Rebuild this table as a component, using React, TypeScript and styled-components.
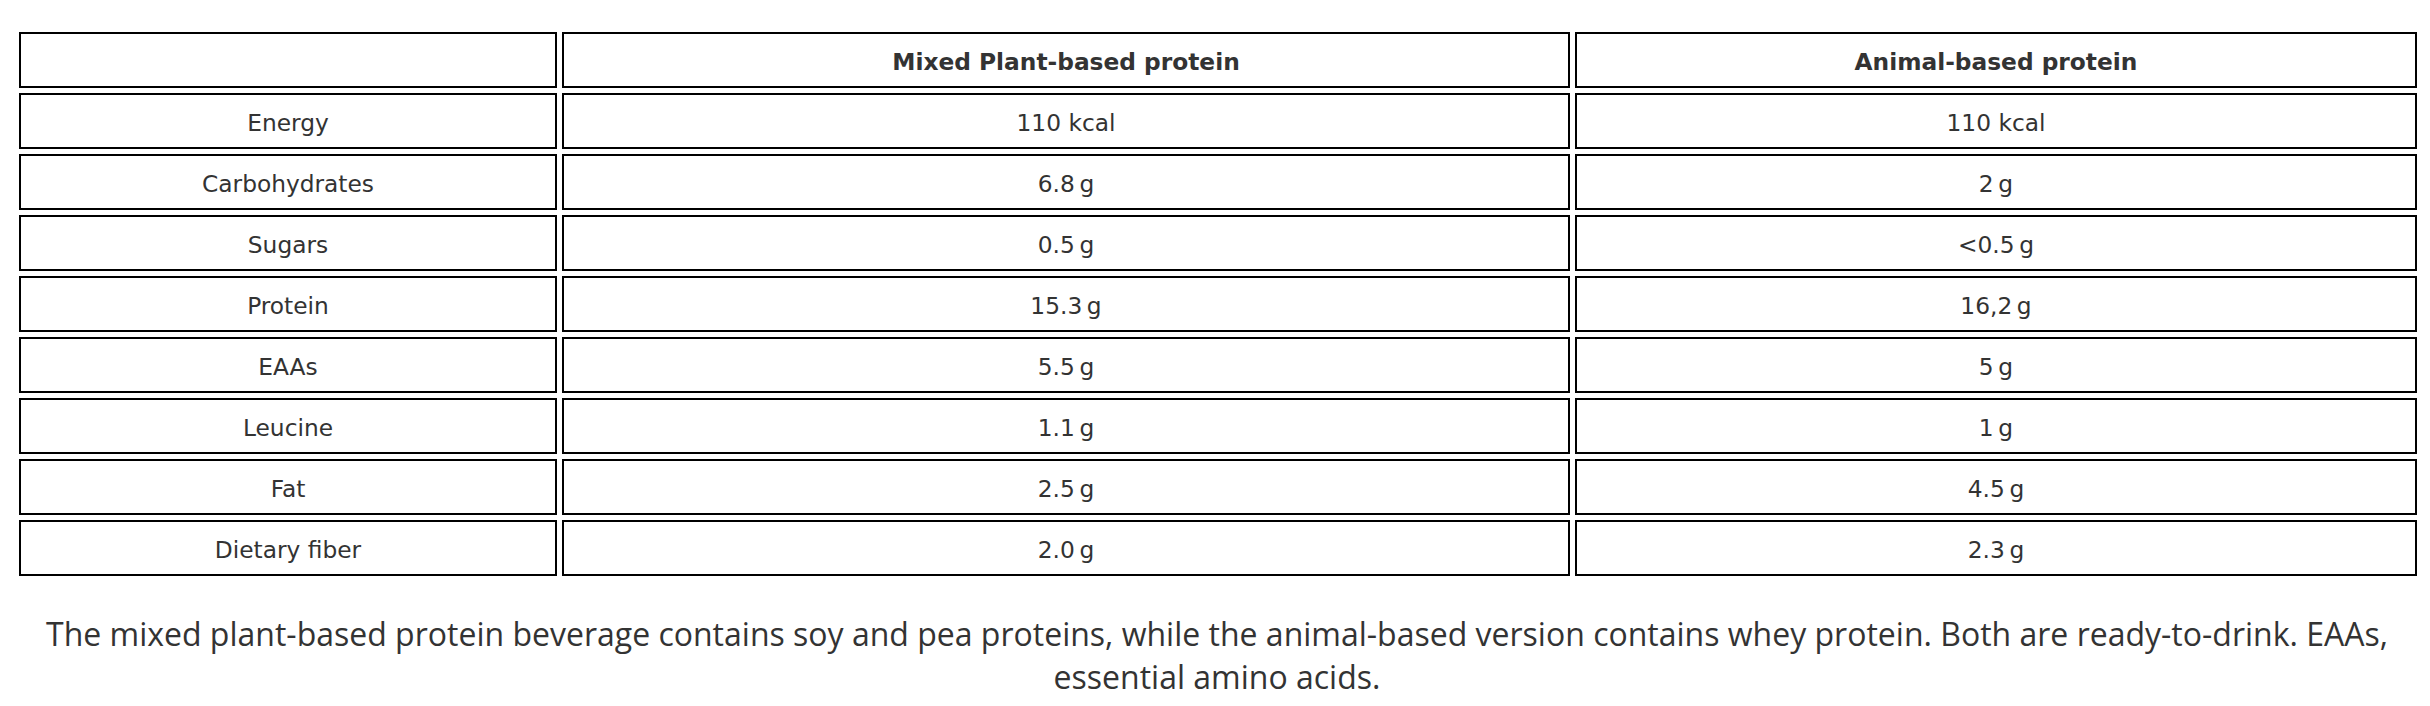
import React from "react";
import styled, { createGlobalStyle } from "styled-components";

const Global = createGlobalStyle`
  html, body { margin: 0; padding: 0; background: #fff; }
  body { font-family: "DejaVu Sans", Verdana, sans-serif; color: #333; }
`;

const Page = styled.div`
  padding: 27px 0 0 14px;
  width: 2430px;
  box-sizing: border-box;
`;

const Table = styled.table`
  border-collapse: separate;
  border-spacing: 5px;
  table-layout: fixed;
  width: 2408px;
  font-family: "DejaVu Sans", Verdana, sans-serif;
  font-size: 23.3px;
  color: #333;
`;

const Cell = styled.td<{ $head?: boolean }>`
  box-sizing: border-box;
  height: 56px;
  border: 2px solid #000;
  padding: 4px 8px 0;
  text-align: center;
  vertical-align: middle;
  font-weight: ${(p) => (p.$head ? 700 : 400)};
  line-height: 26px;
`;

const Caption = styled.p`
  margin: 31px 40px 0 30px;
  font-family: "Open Sans", sans-serif;
  font-size: 32px;
  line-height: 43px;
  color: #333;
  text-align: center;
`;

const T = "\u2009";
const rows: [string, string, string][] = [
  ["Energy", "110 kcal", "110 kcal"],
  ["Carbohydrates", `6.8${T}g`, `2${T}g`],
  ["Sugars", `0.5${T}g`, `<0.5${T}g`],
  ["Protein", `15.3${T}g`, `16,2${T}g`],
  ["EAAs", `5.5${T}g`, `5${T}g`],
  ["Leucine", `1.1${T}g`, `1${T}g`],
  ["Fat", `2.5${T}g`, `4.5${T}g`],
  ["Dietary fiber", `2.0${T}g`, `2.3${T}g`],
];

export default function App() {
  return (
    <>
      <Global />
      <Page>
        <Table>
          <colgroup>
            <col style={{ width: 538 }} />
            <col style={{ width: 1008 }} />
            <col style={{ width: 842 }} />
          </colgroup>
          <thead>
            <tr>
              <Cell as="th" $head></Cell>
              <Cell as="th" $head>Mixed Plant-based protein</Cell>
              <Cell as="th" $head>Animal-based protein</Cell>
            </tr>
          </thead>
          <tbody>
            {rows.map((r) => (
              <tr key={r[0]}>
                <Cell>{r[0]}</Cell>
                <Cell>{r[1]}</Cell>
                <Cell>{r[2]}</Cell>
              </tr>
            ))}
          </tbody>
        </Table>
        <Caption>
          The mixed plant-based protein beverage contains soy and pea proteins, while the animal-based version contains whey protein. Both are ready-to-drink. EAAs, essential amino acids.
        </Caption>
      </Page>
    </>
  );
}
